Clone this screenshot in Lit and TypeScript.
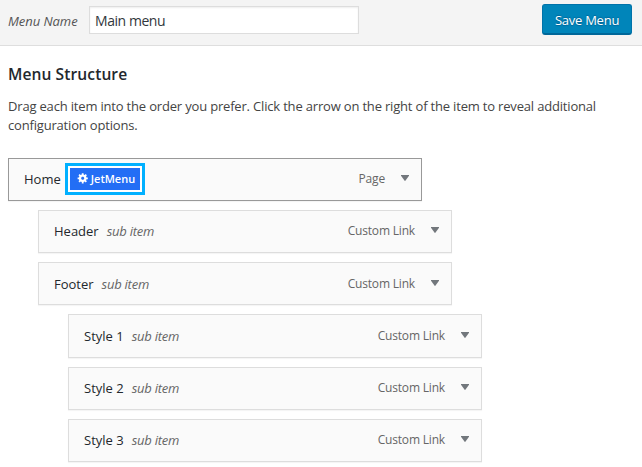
import { LitElement, html, css } from "lit";
import { customElement } from "lit/decorators.js";

interface MenuItem {
  title: string;
  type: string;
  depth: number;
  mod?: string;
}

const ITEMS: MenuItem[] = [
  { title: "Home", type: "Page", depth: 0 },
  { title: "Header", type: "Custom Link", depth: 1 },
  { title: "Footer", type: "Custom Link", depth: 1, mod: "low" },
  { title: "Style 1", type: "Custom Link", depth: 2, mod: "tall" },
  { title: "Style 2", type: "Custom Link", depth: 2 },
  { title: "Style 3", type: "Custom Link", depth: 2 },
];

@customElement("app-root")
export class AppRoot extends LitElement {
  static styles = css`
    :host {
      display: block;
      height: 467px;
      overflow: hidden;
      background: #fff;
      color: #444;
      font: 13px/19px "Open Sans", "Noto Sans", sans-serif;
    }
    * { box-sizing: border-box; }
    header {
      height: 46px;
      padding: 4px 10px 0 8px;
      display: flex;
      align-items: flex-start;
      background: #f4f4f4;
      border-bottom: 1px solid #dedede;
    }
    .label {
      width: 81px;
      padding-top: 8px;
      font-style: italic;
      letter-spacing: -0.05px;
      white-space: nowrap;
      color: #555;
    }
    .name {
      width: 270px;
      height: 28px;
      margin: 2px 0 0;
      padding: 0 5px;
      border: 1px solid #ddd;
      border-radius: 0;
      outline: 0;
      background: #fff;
      box-shadow: inset 0 1px 2px rgba(0, 0, 0, 0.07);
      color: #32373c;
      font: 14px "Open Sans", "Noto Sans", sans-serif;
      letter-spacing: -0.45px;
    }
    .save {
      width: 90px;
      height: 31px;
      margin-left: auto;
      padding: 1px 0 0;
      border: 1px solid #0073aa;
      border-bottom: 2px solid #006799;
      border-radius: 3px;
      background: #0085ba;
      color: #fff;
      font: 500 13px "Open Sans", "Noto Sans", sans-serif;
      letter-spacing: -0.25px;
      text-shadow: 0 -1px 1px #006799, 0 1px 1px #006799;
      white-space: nowrap;
    }
    main { padding: 17px 0 0 8px; }
    h3 {
      margin: 0;
      font-size: 15.6px;
      line-height: 22px;
      font-weight: 600;
      letter-spacing: 0.08px;
      color: #23282d;
    }
    p { margin: 12px 0 23px; letter-spacing: -0.18px; }
    .line { display: block; white-space: nowrap; }
    ul {
      list-style: none;
      margin: 0;
      padding: 0;
      display: grid;
      gap: 9px;
    }
    li {
      display: flex;
      align-items: center;
      width: 414px;
      height: 43px;
      padding: 0 12px 0 15px;
      border: 1px solid #ddd;
      background: #fafafa;
      box-shadow: 0 1px 1px rgba(0, 0, 0, 0.04);
      white-space: nowrap;
    }
    .low { padding-top: 2px; }
    .tall { height: 44px; padding-top: 1px; }
    .d0 { border-color: #999; }
    .d1 { margin-left: 30px; }
    .d2 { margin-left: 60px; }
    .title { font-weight: 500; color: #23282d; }
    .sub {
      margin-left: 8px;
      font-style: italic;
      letter-spacing: -0.25px;
      color: #666;
    }
    .type {
      margin-left: auto;
      margin-bottom: 2px;
      font-size: 12px;
      letter-spacing: -0.18px;
      color: #666;
    }
    .arrow {
      width: 8px;
      height: 6px;
      margin: -3px 0 0 16px;
      fill: #72777c;
    }
    .ring {
      margin-left: 4px;
      width: 80px;
      height: 32px;
      margin-top: -1px;
      border: 3px solid #00b0ff;
      padding: 2px;
      background: #fff;
    }
    .jet {
      display: flex;
      align-items: center;
      width: 70px;
      height: 22px;
      padding: 0 0 1px 7px;
      background: #236ef5;
      color: #fff;
      font-size: 11px;
      font-weight: 600;
    }
    .gear { width: 12px; height: 12px; margin: -1px 2px 0 0; }
  `;

  private badge() {
    return html`<span class="ring"><span class="jet">
      <svg class="gear" viewBox="0 0 20 20" fill="#fff">
        <path d="M18 12h-2.18c-.17.7-.44 1.35-.81 1.93l1.54 1.54-2.1 2.1-1.54-1.54c-.58.36-1.23.63-1.91.79V19H8v-2.18c-.68-.16-1.33-.43-1.91-.79l-1.54 1.54-2.12-2.12 1.54-1.54c-.36-.58-.63-1.23-.79-1.91H1V9.03h2.17c.16-.7.44-1.35.8-1.94L2.43 5.55l2.1-2.1 1.54 1.54c.58-.37 1.24-.64 1.93-.81V2h3v2.18c.68.16 1.33.43 1.91.79l1.54-1.54 2.12 2.12-1.54 1.54c.36.59.64 1.24.8 1.94H18V12zm-8.5 1.1c1.5 0 2.6-1.1 2.6-2.6s-1.1-2.6-2.6-2.6-2.6 1.1-2.6 2.6 1.1 2.6 2.6 2.6z" />
      </svg>JetMenu</span></span>`;
  }

  render() {
    return html`
      <header>
        <span class="label">Menu Name</span>
        <input class="name" type="text" .value=${"Main menu"} />
        <button class="save">Save Menu</button>
      </header>
      <main>
        <h3>Menu Structure</h3>
        <p>
          <span class="line">Drag each item into the order you prefer. Click the arrow on the right of the item to reveal additional</span>
          <span class="line">configuration options.</span>
        </p>
        <ul>
          ${ITEMS.map(
            (item) => html`<li class="d${item.depth} ${item.mod ?? ""}">
              <span class="title">${item.title}</span>
              ${item.depth ? html`<span class="sub">sub item</span>` : this.badge()}
              <span class="type">${item.type}</span>
              <svg class="arrow" viewBox="0 0 8 6"><path d="M-.5 0h9L4 6.2z" /></svg>
            </li>`
          )}
        </ul>
      </main>
    `;
  }
}
